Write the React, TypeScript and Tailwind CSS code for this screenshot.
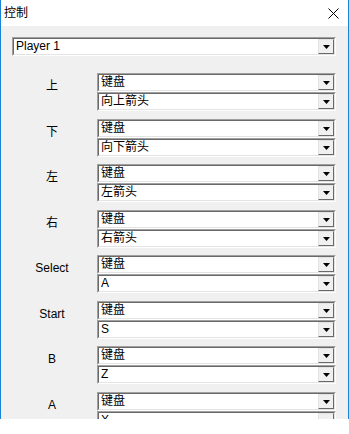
import React from "react";

const rows = [
  { label: "上", key: "向上箭头" },
  { label: "下", key: "向下箭头" },
  { label: "左", key: "左箭头" },
  { label: "右", key: "右箭头" },
  { label: "Select", key: "A" },
  { label: "Start", key: "S" },
  { label: "B", key: "Z" },
  { label: "A", key: "X" },
];

const font = { fontFamily: '"Liberation Sans", "Noto Sans CJK SC", sans-serif' };

function Combo({ value }: { value: string }) {
  return (
    <div className="h-[19px] border border-t-[#a0a0a0] border-l-[#a0a0a0] border-b-white border-r-white">
      <div className="flex h-full border border-t-[#696969] border-l-[#696969] border-b-[#e3e3e3] border-r-[#e3e3e3] bg-white">
        <span className="flex-1 truncate pl-[2px] text-[12px] leading-[15px] text-black">{value}</span>
        <div className="flex w-[16px] items-center justify-center border border-t-[#e3e3e3] border-l-[#e3e3e3] border-b-[#696969] border-r-[#696969] bg-[#f0f0f0]">
          <svg width="7" height="4" viewBox="0 0 7 4">
            <path d="M0 0h7L3.5 4z" fill="#000" />
          </svg>
        </div>
      </div>
    </div>
  );
}

export default function App() {
  return (
    <div className="h-[434px] w-[349px] overflow-hidden bg-white" style={font}>
      <div className="flex h-[419px] flex-col border-x border-[#1883d7]">
        <header className="flex h-[26px] items-center justify-between bg-white pl-[3px] pr-[9px]">
          <span className="text-[12px] text-black">控制</span>
          <svg width="11" height="11" viewBox="0 0 11 11">
            <path d="M0.5 0.5l10 10M10.5 0.5l-10 10" stroke="#000" strokeWidth="1" />
          </svg>
        </header>
        <main className="flex-1 overflow-hidden bg-[#f0f0f0] pl-[11px] pr-[12px] pt-[11px]">
          <Combo value="Player 1" />
          <div className="mt-[17px] flex flex-col gap-[7px]">
            {rows.map((r, i) => (
              <div key={r.label} className={i % 2 === 1 ? "flex pt-px" : "flex"}>
                <div className="w-[80px] pt-[6px] text-center text-[12px] leading-[14px] text-black">{r.label}</div>
                <div className="ml-[5px] flex flex-1 flex-col">
                  <Combo value="键盘" />
                  <Combo value={r.key} />
                </div>
              </div>
            ))}
          </div>
        </main>
      </div>
    </div>
  );
}
